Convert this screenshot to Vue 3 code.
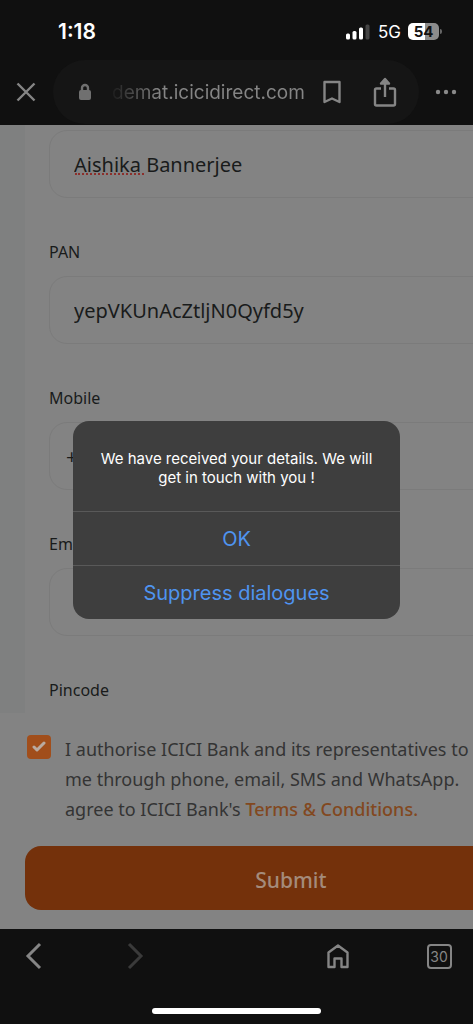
<template>
  <div class="screen">
    <header class="top">
      <div class="status-bar">
        <span class="time">1:18</span>
        <div class="status-icons">
          <svg width="25" height="16" viewBox="0 0 25 16" aria-hidden="true">
            <rect x="0" y="9.500" width="4" height="6" rx="1.500" fill="#fff" />
            <rect x="6.500" y="7" width="4" height="8.500" rx="1.500" fill="#fff" />
            <rect x="13" y="3.500" width="4" height="12" rx="1.500" fill="#fff" />
            <rect x="19.500" y="0.500" width="4" height="15" rx="1.500" fill="#444" />
          </svg>
          <span class="network">5G</span>
          <span class="battery">54</span>
        </div>
      </div>

      <div class="toolbar">
        <button class="icon-btn close" aria-label="Close">
          <svg width="20" height="20" viewBox="0 0 20 20">
            <path d="M1.500 1.500 L18.500 18.500 M18.500 1.500 L1.500 18.500" />
          </svg>
        </button>
        <div class="url-pill">
          <svg class="lock" width="14" height="18" viewBox="0 0 14 18" aria-hidden="true">
            <rect x="1" y="7" width="12" height="10" rx="2" fill="#707070" stroke="none" />
            <path d="M4 8 V5 a3 3 0 0 1 6 0 V8" stroke="#707070" />
          </svg>
          <span class="url">demat.icicidirect.com</span>
          <button class="icon-btn bookmark" aria-label="Bookmark">
            <svg width="20" height="24" viewBox="0 0 20 24">
              <path d="M2.500 2 H17.500 V22 L10 18.500 L2.500 22 Z" stroke-linejoin="round" />
            </svg>
          </button>
          <button class="icon-btn" aria-label="Share">
            <svg width="24" height="30" viewBox="0 0 24 30">
              <path d="M8 11.500 H3.500 Q2 11.500 2 13 V27 Q2 28.500 3.500 28.500 H20.500 Q22 28.500 22 27 V13 Q22 11.500 20.500 11.500 H16" />
              <path d="M12 20 V3" />
              <path d="M8 6.500 L12 2 L16 6.500 Z" fill="#858585" stroke-linejoin="round" />
            </svg>
          </button>
        </div>
        <button class="icon-btn more" aria-label="More">
          <svg width="22" height="6" viewBox="0 0 22 6">
            <g fill="#8a8a8a" stroke="none">
              <circle cx="3" cy="3" r="2.200" />
              <circle cx="11" cy="3" r="2.200" />
              <circle cx="19" cy="3" r="2.200" />
            </g>
          </svg>
        </button>
      </div>
    </header>

    <main class="page">
      <form class="wide" @submit.prevent>
        <div class="card">
          <div class="name-field">
            <input v-model="form.name" class="field-input" type="text" aria-label="Name" spellcheck="false" />
          </div>
          <div v-for="field in fields" :key="field.key" class="field">
            <label :for="field.key">{{ field.label }}</label>
            <input
              :id="field.key"
              v-model="form[field.key]"
              class="field-input"
              :class="field.key"
              type="text"
              spellcheck="false"
            />
          </div>
          <div class="field last">
            <label>Pincode</label>
          </div>
        </div>

        <div class="consent">
          <div class="consent-row">
            <input id="agree" v-model="form.agree" type="checkbox" />
            <svg class="tick" width="14" height="12" viewBox="0 0 14 12" aria-hidden="true">
              <path d="M2 6 L5 9 L12 2" />
            </svg>
            <label for="agree">
              I authorise ICICI Bank and its representatives to<br />
              me through phone, email, SMS and WhatsApp.<br />
              agree to ICICI Bank's <a href="#">Terms &amp; Conditions.</a>
            </label>
          </div>
          <button class="submit" type="submit">Submit</button>
        </div>
      </form>
    </main>

    <footer class="bottom">
      <nav class="nav">
        <button class="icon-btn" aria-label="Back">
          <svg width="18" height="28" viewBox="0 0 18 28">
            <path d="M15 2 L3 14 L15 26" stroke-width="3" />
          </svg>
        </button>
        <button class="icon-btn disabled" aria-label="Forward">
          <svg width="18" height="28" viewBox="0 0 18 28">
            <path d="M3 2 L15 14 L3 26" stroke-width="3" />
          </svg>
        </button>
        <button class="icon-btn home" aria-label="Home">
          <svg width="24" height="26" viewBox="0 0 24 26">
            <path d="M2.500 9.500 L12 2.500 L21.500 9.500 V24 H15.500 V15.500 H8.500 V24 H2.500 Z" stroke-linejoin="round" />
          </svg>
        </button>
        <button class="icon-btn" aria-label="Tabs"><span class="tabs">30</span></button>
      </nav>
      <div class="home-indicator"></div>
    </footer>

    <div v-if="showDialog" class="overlay">
      <div class="dialog" role="alertdialog">
        <p>We have received your details. We will<br />get in touch with you !</p>
        <button @click="showDialog = false">OK</button>
        <button @click="showDialog = false">Suppress dialogues</button>
      </div>
    </div>
  </div>
</template>

<script setup>
import { reactive, ref } from "vue";

const showDialog = ref(true);

const fields = [
  { key: "pan", label: "PAN" },
  { key: "mobile", label: "Mobile" },
  { key: "email", label: "Email" },
];

const form = reactive({
  name: "Aishika Bannerjee",
  pan: "yepVKUnAcZtljN0Qyfd5y",
  mobile: "+",
  email: "",
  agree: true,
});
</script>

<style>
body {
  background: #101010;
}
</style>

<style scoped>
* {
  box-sizing: border-box;
}

.screen {
  position: relative;
  display: flex;
  flex-direction: column;
  min-height: 100vh;
  overflow: hidden;
  background: #101010;
  font-family: Inter, "Liberation Sans", sans-serif;
}

button {
  padding: 0;
  border: none;
  background: transparent;
  font-family: inherit;
  cursor: pointer;
}

svg {
  display: block;
  fill: none;
  stroke: #858585;
  stroke-width: 2.4;
}

/* Status bar and address bar */
.status-bar {
  display: flex;
  justify-content: space-between;
  align-items: center;
  height: 59px;
  padding: 4px 34px 0 58px;
  color: #fff;
}

.time {
  font-size: 21px;
  font-weight: 600;
}

.status-icons {
  display: flex;
  align-items: center;
  gap: 7px;
}

.status-icons svg {
  stroke: none;
}

.network {
  font-size: 17px;
}

.battery {
  position: relative;
  width: 31px;
  height: 17px;
  border-radius: 5px;
  background: linear-gradient(to right, #fff 55%, #8c8c8c 55%);
  color: #111;
  font-size: 15px;
  font-weight: 700;
  line-height: 17px;
  text-align: center;
}

.battery::after {
  content: "";
  position: absolute;
  top: 6px;
  right: -3px;
  width: 2px;
  height: 5px;
  border-radius: 0 2px 2px 0;
  background: #666;
}

.toolbar {
  display: flex;
  align-items: center;
  height: 66px;
  padding: 0 16px;
}

.icon-btn {
  display: flex;
  justify-content: center;
  align-items: center;
}

.url-pill {
  display: flex;
  flex: 1;
  align-items: center;
  height: 64px;
  margin: 0 16px 0 17px;
  padding: 0 22px 0 25px;
  border-radius: 32px;
  background: #151515;
}

.url {
  flex: 1;
  margin-left: 20px;
  background: linear-gradient(to right, #1c1c1c, #858585 48px);
  background-clip: text;
  color: transparent;
  font-size: 19px;
  white-space: nowrap;
}

.bookmark {
  margin-right: 31px;
}

/* Web page, wider than the window */
.page {
  flex: 1;
  overflow: hidden;
  background: #838383;
  color: #191b1b;
  font-family: "Noto Sans", "Open Sans", sans-serif;
}

.wide {
  width: 123%;
}

.card {
  padding: 5px 24px 12px;
  border-left: 25px solid #7f8080;
}

.name-field {
  position: relative;
}

/* spell check mark under the first name */
.name-field::after {
  content: "";
  position: absolute;
  left: 26px;
  top: 43px;
  width: 69px;
  border-bottom: 2px dotted #8c2f2b;
}

.field {
  margin-top: 43px;
}

.field label {
  display: block;
  margin-bottom: 13px;
  font-size: 16px;
  line-height: 22px;
}

.last label {
  margin-bottom: 0;
}

.field-input {
  display: block;
  width: 100%;
  height: 68px;
  padding: 0 24px;
  border: 1px solid #7b7b7b;
  border-radius: 18px;
  outline: none;
  background: transparent;
  color: #191b1b;
  font-family: inherit;
  font-size: 20px;
}

.mobile {
  padding-left: 16px;
}

.consent {
  padding: 21px 25px 19px;
}

.consent-row {
  position: relative;
  display: flex;
  gap: 14px;
  padding-left: 2px;
  color: #343434;
  font-size: 18px;
  line-height: 30px;
  white-space: nowrap;
}

.consent-row input {
  appearance: none;
  flex: none;
  width: 24px;
  height: 24px;
  margin: 1px 0 0;
  border-radius: 4px;
  background: #a14e1b;
}

.tick {
  position: absolute;
  left: 7px;
  top: 7px;
  stroke: #b9aaa0;
  stroke-width: 3;
  stroke-linecap: round;
  stroke-linejoin: round;
  pointer-events: none;
}

.consent-row a {
  color: #824820;
  font-weight: 500;
  text-decoration: none;
}

.submit {
  width: 100%;
  height: 64px;
  margin-top: 22px;
  padding-top: 4px;
  border-radius: 16px;
  background: #74310b;
  color: #a48b7b;
  font-size: 21px;
  font-weight: 500;
}

/* Browser navigation */
.bottom {
  padding: 3px 10px 10px;
}

.nav {
  display: grid;
  grid-template-columns: repeat(5, 48px);
  justify-content: space-between;
}

.nav .icon-btn {
  height: 48px;
}

.home {
  grid-column: 4;
}

.disabled svg {
  stroke: #3a3a3a;
}

.tabs {
  width: 25px;
  height: 25px;
  border: 2px solid #858585;
  border-radius: 4px;
  color: #858585;
  font-size: 14px;
  line-height: 21px;
  text-align: center;
}

.home-indicator {
  width: 169px;
  height: 6px;
  margin: 28px auto 0;
  border-radius: 3px;
  background: #fff;
}

/* Alert */
.overlay {
  position: absolute;
  inset: 0;
  display: flex;
  justify-content: center;
  align-items: center;
  padding-top: 16px;
}

.dialog {
  width: 327px;
  max-width: 90%;
  overflow: hidden;
  border-radius: 16px;
  background: #3e3e3e;
}

.dialog p {
  margin: 0;
  padding: 28px 0 24px;
  color: #fff;
  font-size: 15px;
  line-height: 19px;
  text-align: center;
  white-space: nowrap;
}

.dialog button {
  display: block;
  width: 100%;
  height: 54px;
  border-top: 1px solid #595959;
  color: #4f94f0;
  font-size: 20px;
}
</style>
